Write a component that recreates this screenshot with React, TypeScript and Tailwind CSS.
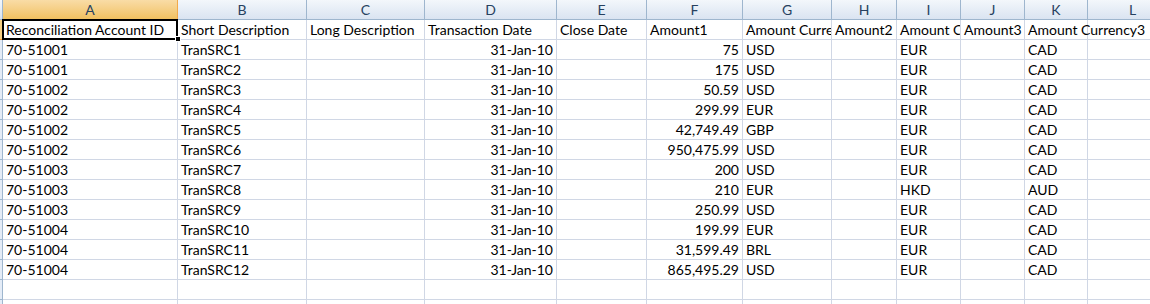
const cols = [
  { key: "A", w: "w-[175px]" },
  { key: "B", w: "w-[129px]" },
  { key: "C", w: "w-[118px]" },
  { key: "D", w: "w-[132px]" },
  { key: "E", w: "w-[90px]" },
  { key: "F", w: "w-[96px]" },
  { key: "G", w: "w-[89px]" },
  { key: "H", w: "w-[65px]" },
  { key: "I", w: "w-[64px]" },
  { key: "J", w: "w-[64px]" },
  { key: "K", w: "w-[63px]" },
  { key: "L", w: "w-[90px]" },
];

const headers = [
  "Reconciliation Account ID",
  "Short Description",
  "Long Description",
  "Transaction Date",
  "Close Date",
  "Amount1",
  "Amount Currency1",
  "Amount2",
  "Amount Currency2",
  "Amount3",
  "Amount Currency3",
  "",
];

type Row = [string, string, string, string, string, string];

const rows: Row[] = [
  ["70-51001", "TranSRC1", "75", "USD", "EUR", "CAD"],
  ["70-51001", "TranSRC2", "175", "USD", "EUR", "CAD"],
  ["70-51002", "TranSRC3", "50.59", "USD", "EUR", "CAD"],
  ["70-51002", "TranSRC4", "299.99", "EUR", "EUR", "CAD"],
  ["70-51002", "TranSRC5", "42,749.49", "GBP", "EUR", "CAD"],
  ["70-51002", "TranSRC6", "950,475.99", "USD", "EUR", "CAD"],
  ["70-51003", "TranSRC7", "200", "USD", "EUR", "CAD"],
  ["70-51003", "TranSRC8", "210", "EUR", "HKD", "AUD"],
  ["70-51003", "TranSRC9", "250.99", "USD", "EUR", "CAD"],
  ["70-51004", "TranSRC10", "199.99", "EUR", "EUR", "CAD"],
  ["70-51004", "TranSRC11", "31,599.49", "BRL", "EUR", "CAD"],
  ["70-51004", "TranSRC12", "865,495.29", "USD", "EUR", "CAD"],
];

const cell = "h-5 shrink-0 border-r border-b border-[#d0d7e5] px-[3px] leading-[19px] whitespace-nowrap overflow-hidden";

function DataRow({ values }: { values: string[] }) {
  // D and F hold numbers/dates, so they sit right
  return (
    <div className="flex">
      <div className="h-5 w-[3px] shrink-0 border-r border-b border-[#9eb6ce] bg-[#e4ecf7]" />
      {cols.map((c, i) => (
        <div
          key={c.key}
          className={`${cell} ${c.w} ${i === 3 || i === 5 ? "text-right" : ""}`}
        >
          {values[i]}
        </div>
      ))}
    </div>
  );
}

export default function App() {
  return (
    <div
      className="h-[304px] w-[1150px] overflow-hidden bg-white text-[14px] text-black"
      style={{ fontFamily: "Lato, 'Liberation Sans', sans-serif" }}
    >
      {/* column letters */}
      <div className="flex">
        <div className="h-5 w-[3px] shrink-0 border-r border-b border-[#9eb6ce] bg-gradient-to-b from-[#f3f7fb] to-[#dae4f1]" />
        {cols.map((c, i) => (
          <div
            key={c.key}
            className={
              i === 0
                ? `h-5 shrink-0 ${c.w} border-r border-b border-r-[#f2a94a] border-b-[#f29536] bg-gradient-to-b from-[#f9dca6] to-[#f1c15f] text-center leading-[19px] text-[#27415f]`
                : `h-5 shrink-0 ${c.w} border-r border-b border-[#9eb6ce] bg-gradient-to-b from-[#f3f7fb] to-[#dae4f1] text-center leading-[19px] text-[#27415f]`
            }
          >
            {c.key}
          </div>
        ))}
      </div>

      {/* header row, A1 selected */}
      <div className="flex">
        <div className="h-5 w-[3px] shrink-0 border-r border-b border-[#f29536] bg-[#f6cf83]" />
        {cols.map((c, i) => {
          if (i === 0)
            return (
              <div key={c.key} className={`relative z-10 h-5 shrink-0 ${c.w} border-b border-[#d0d7e5] leading-[19px]`}>
                <div className="absolute -left-px -top-px bottom-[-1px] right-0 border-2 border-black" />
                <div className="absolute -bottom-[3px] -right-[3px] h-[6px] w-[6px] border border-white bg-black" />
                <span className="pl-[3px]">{headers[i]}</span>
              </div>
            );
          // K spills into the empty L cell, as Excel does
          if (i === 10)
            return (
              <div key={c.key} className={`relative h-5 shrink-0 ${c.w} border-r border-b border-[#d0d7e5] leading-[19px]`}>
                <span className="absolute left-[3px] top-0 z-10 whitespace-nowrap">{headers[i]}</span>
              </div>
            );
          return (
            <div key={c.key} className={`${cell} ${c.w}`}>
              {headers[i]}
            </div>
          );
        })}
      </div>

      {rows.map((r, k) => (
        <DataRow
          key={k}
          values={[r[0], r[1], "", "31-Jan-10", "", r[2], r[3], "", r[4], "", r[5], ""]}
        />
      ))}

      {[0, 1].map((k) => (
        <DataRow key={`e${k}`} values={Array(12).fill("")} />
      ))}
    </div>
  );
}
